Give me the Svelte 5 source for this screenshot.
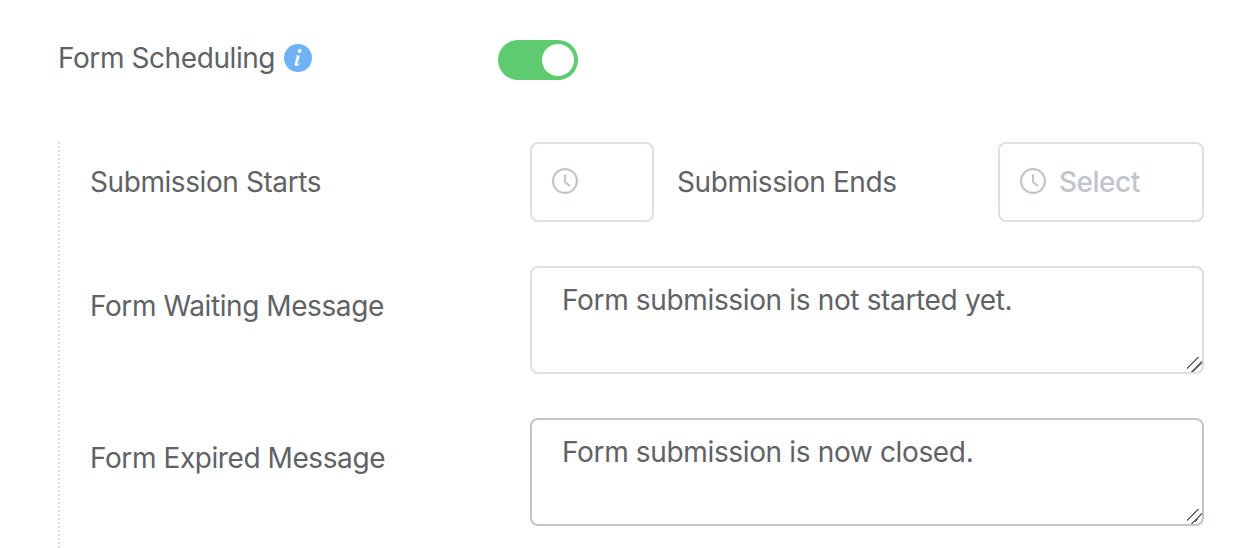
<script>
  let waitingMessage = $state('Form submission is not started yet.');
  let expiredMessage = $state('Form submission is now closed.');
  let scheduling = $state(true);
</script>

{#snippet clock()}
  <svg class="clock" viewBox="0 0 24 24" width="26" height="26" fill="none" aria-hidden="true">
    <circle cx="12" cy="12" r="11" />
    <path d="M12 6v7l4.6 3.6" />
  </svg>
{/snippet}

<div class="page">
  <div class="top-row">
    <div class="top-label">
      Form Scheduling
      <svg class="info" viewBox="0 0 28 28" width="28" height="28" aria-hidden="true">
        <circle cx="14" cy="14" r="14" fill="#6fb3f6" />
        <circle cx="15.6" cy="6.9" r="1.9" fill="#fff" />
        <path d="M11.8 11.4h4.1l-2.4 8.4c-.2.7.5.9 1 .4l1.1-1.1.5.4c-1.1 1.6-2.4 2.4-3.8 2.4-1.3 0-1.9-.8-1.5-2.2l1.8-6.6c.2-.7-.1-1-1-1z" fill="#fff" />
      </svg>
    </div>
    <button class="toggle" class:on={scheduling} onclick={() => (scheduling = !scheduling)} aria-label="Form Scheduling"><span class="knob"></span></button>
  </div>

  <div class="section">
    <div class="row times">
      <div class="label">Submission Starts</div>
      <div class="picker short">{@render clock()}</div>
      <div class="inline-label">Submission Ends</div>
      <div class="picker long">{@render clock()}<span class="placeholder">Select</span></div>
    </div>
    <div class="row">
      <div class="label">Form Waiting Message</div>
      <textarea bind:value={waitingMessage}></textarea>
    </div>
    <div class="row">
      <div class="label">Form Expired Message</div>
      <textarea class="hovered" bind:value={expiredMessage}></textarea>
    </div>
  </div>
</div>

<style>
  :global(body) {
    background: #fff;
    overflow: hidden;
  }

  .page {
    width: 1204px;
    height: 548px;
    padding: 40px 0 0 58px;
    box-sizing: border-box;
    font-family: Inter, "Liberation Sans", sans-serif;
    font-size: 28px;
    font-weight: 420;
    letter-spacing: -0.42px;
    color: #606266;
  }

  .top-row {
    display: flex;
    align-items: flex-start;
    height: 40px;
    margin-bottom: 62px;
  }

  .top-label {
    width: 440px;
    display: flex;
    align-items: center;
    gap: 9px;
    height: 35px;
  }

  .info {
    flex: none;
  }

  .toggle {
    width: 80px;
    height: 40px;
    border: 0;
    border-radius: 20px;
    background: #c0ccda;
    padding: 4px;
    display: flex;
    cursor: pointer;
  }

  .toggle.on {
    background: #5fcb71;
    justify-content: flex-end;
  }

  .knob {
    width: 32px;
    height: 32px;
    border-radius: 50%;
    background: #fff;
  }

  .section {
    border-left: 2px dotted #dcdfe6;
    padding-left: 30px;
    height: 406px;
    box-sizing: border-box;
    display: flex;
    flex-direction: column;
    gap: 44px;
  }

  .row {
    display: flex;
    align-items: flex-start;
  }

  .label {
    width: 440px;
    flex: none;
    line-height: 80px;
  }

  .inline-label {
    width: 344px;
    flex: none;
    padding-left: 23px;
    box-sizing: border-box;
    line-height: 80px;
  }

  .picker {
    height: 80px;
    box-sizing: border-box;
    border: 2px solid #dcdfe6;
    border-radius: 8px;
    display: flex;
    align-items: center;
    padding-left: 20px;
    gap: 13px;
  }

  .short {
    width: 124px;
  }

  .long {
    width: 206px;
  }

  .clock {
    flex: none;
    margin-top: -2px;
  }

  .clock circle,
  .clock path {
    stroke: #c0c4cc;
    stroke-width: 2;
  }

  .placeholder {
    color: #c0c4cc;
    font-weight: 500;
    letter-spacing: -0.5px;
  }

  textarea {
    display: block;
    width: 674px;
    height: 108px;
    box-sizing: border-box;
    padding: 12px 30px;
    margin: 0;
    border: 2px solid #dcdfe6;
    border-radius: 8px;
    outline: none;
    font: inherit;
    letter-spacing: -0.35px;
    line-height: 40px;
    color: #606266;
    background: #fff;
  }

  textarea.hovered {
    border-color: #c0c4cc;
  }

  /* chrome's default grip is too small, redraw the two strokes */
  textarea::-webkit-resizer {
    background: linear-gradient(
      135deg,
      transparent 35%,
      #6a6a6a 35%,
      #6a6a6a 43%,
      transparent 43%,
      transparent 62%,
      #6a6a6a 62%,
      #6a6a6a 70%,
      transparent 70%
    );
  }
</style>
